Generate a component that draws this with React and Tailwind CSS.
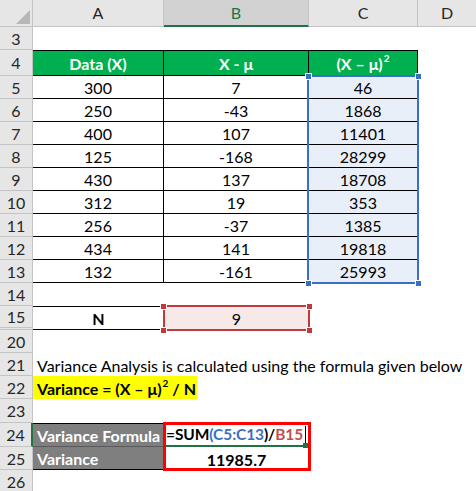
import React from "react";

const data = [
  [5, "300", "7", "46"],
  [6, "250", "-43", "1868"],
  [7, "400", "107", "11401"],
  [8, "125", "-168", "28299"],
  [9, "430", "137", "18708"],
  [10, "312", "19", "353"],
  [11, "256", "-37", "1385"],
  [12, "434", "141", "19818"],
  [13, "132", "-161", "25993"],
];

function RowHead({ children, className = "" }) {
  return (
    <div
      className={`w-[33px] shrink-0 bg-[#e6e6e6] border-r border-b border-[#c4c4c4] flex items-center justify-center text-[#262626] pt-[1px] ${className}`}
    >
      {children}
    </div>
  );
}

export default function App() {
  return (
    <div className="relative w-[476px] h-[491px] overflow-hidden bg-white text-[16px] leading-none text-black font-['Lato','Liberation_Sans',sans-serif]">
      {/* column headers */}
      <div className="flex h-[27px] bg-[#e6e6e6] text-[#262626] text-[16px]">
        <div className="relative w-[33px] shrink-0 border-r border-b border-[#c4c4c4]">
          <svg className="absolute left-[15px] top-[9px]" width="16" height="16" viewBox="0 0 16 16">
            <polygon points="15,1 15,15 1,15" fill="#b7b7b7" />
          </svg>
        </div>
        <div className="w-[131px] shrink-0 border-r border-b border-[#c4c4c4] flex items-center justify-center">A</div>
        <div className="w-[145px] shrink-0 border-r border-[#c4c4c4] border-b-2 border-b-[#217346] bg-[#d2d2d2] text-[#217346] flex items-center justify-center">B</div>
        <div className="w-[109px] shrink-0 border-r border-b border-[#c4c4c4] flex items-center justify-center">C</div>
        <div className="flex-1 border-b border-[#c4c4c4] flex items-center justify-center">D</div>
      </div>

      {/* row 3 */}
      <div className="flex h-[23px]">
        <RowHead>3</RowHead>
        <div className="flex-1" />
      </div>

      {/* row 4 header */}
      <div className="flex h-[26px]">
        <RowHead>4</RowHead>
        <div className="w-[131px] shrink-0 bg-[#00b050] border-t border-b border-r border-black flex items-center justify-center font-bold text-white pt-[2px]">Data (X)</div>
        <div className="w-[145px] shrink-0 bg-[#00b050] border-t border-b border-r border-black flex items-center justify-center font-bold text-white pt-[2px]">X - μ</div>
        <div className="w-[109px] shrink-0 bg-[#00b050] border-t border-b border-r border-black flex items-center justify-center font-bold text-white pt-[2px]">
          (X – μ)<span className="text-[10px] relative -top-[6px] ml-[1px]">2</span>
        </div>
        <div className="flex-1" />
      </div>

      {/* data rows */}
      {data.map(([n, a, b, c]) => (
        <div key={n} className="flex h-[23px]">
          <RowHead>{n}</RowHead>
          <div className="w-[131px] shrink-0 border-r border-b border-black flex items-center justify-center pt-[2px]">{a}</div>
          <div className="w-[145px] shrink-0 border-r border-b border-black flex items-center justify-center pt-[2px]">{b}</div>
          <div className="w-[109px] shrink-0 border-r border-b border-black bg-[#e9eff8] flex items-center justify-center pt-[2px]">{c}</div>
          <div className="flex-1" />
        </div>
      ))}

      {/* row 14 */}
      <div className="flex h-[23px]">
        <RowHead>14</RowHead>
        <div className="flex-1" />
      </div>

      {/* row 15 */}
      <div className="flex h-[24px]">
        <RowHead className="border-b-[3px] border-double">15</RowHead>
        <div className="w-[131px] shrink-0 border-t border-b border-black flex items-center justify-center font-bold pt-[2px]">N</div>
        <div className="w-[145px] shrink-0 bg-[#f8e9e9] flex items-center justify-center pt-[2px]">9</div>
        <div className="flex-1" />
      </div>

      {/* row 20 */}
      <div className="flex h-[23px]">
        <RowHead>20</RowHead>
        <div className="flex-1" />
      </div>

      {/* row 21 */}
      <div className="flex h-[23px]">
        <RowHead>21</RowHead>
        <div className="flex-1 flex items-center pl-[4px] pt-[2px] whitespace-nowrap">
          Variance Analysis is calculated using the formula given below
        </div>
      </div>

      {/* row 22 */}
      <div className="flex h-[23px]">
        <RowHead>22</RowHead>
        <div className="w-[164px] shrink-0 bg-[#ffff00] flex items-center pl-[4px] pt-[2px] font-bold whitespace-nowrap">
          Variance = (X – μ)<span className="text-[10px] relative -top-[6px] ml-[1px]">2</span>&nbsp;/ N
        </div>
        <div className="flex-1" />
      </div>

      {/* row 23 */}
      <div className="flex h-[24px]">
        <RowHead>23</RowHead>
        <div className="flex-1" />
      </div>

      {/* row 24 */}
      <div className="flex h-[24px]">
        <RowHead className="bg-[#d2d2d2] text-[#217346] border-r-2 border-r-[#217346]">24</RowHead>
        <div className="w-[131px] shrink-0 bg-[#7f7f7f] border-t border-b border-black border-b-[#5a5a5a] flex items-center pl-[4px] pt-[2px] font-bold text-white whitespace-nowrap">
          Variance Formula
        </div>
        <div className="relative w-[145px] shrink-0 border-b-2 border-[#217346] flex items-center pl-[2px] pt-[2px] font-bold whitespace-nowrap text-[15.5px] tracking-[-0.1px]">
          <span>=SUM</span>
          <span className="text-[#3a6fc4]">(C5:C13</span>
          <span>)/</span>
          <span className="text-[#c0504d]">B15</span>
          <span className="inline-block w-px h-[18px] bg-black ml-[2px]" />
          <span className="absolute right-[1px] -bottom-[3px] w-[5px] h-[5px] bg-[#217346]" />
        </div>
        <div className="flex-1" />
      </div>

      {/* row 25 */}
      <div className="flex h-[23px]">
        <RowHead>25</RowHead>
        <div className="w-[131px] shrink-0 bg-[#7f7f7f] border-b border-black flex items-center pl-[4px] pt-[2px] font-bold text-white">
          Variance
        </div>
        <div className="w-[145px] shrink-0 flex items-center justify-center pt-[2px] font-bold">11985.7</div>
        <div className="flex-1" />
      </div>

      {/* row 26 */}
      <div className="flex h-[23px]">
        <RowHead>26</RowHead>
        <div className="flex-1" />
      </div>

      {/* selection C5:C13 */}
      <div className="absolute left-[307px] top-[75px] w-[112px] h-[209px] border-2 border-[#3b6fc4]" />
      <div className="absolute left-[305px] top-[73px] w-[7px] h-[7px] bg-[#3b6fc4] border border-white" />
      <div className="absolute left-[415px] top-[73px] w-[7px] h-[7px] bg-[#3b6fc4] border border-white" />
      <div className="absolute left-[305px] top-[280px] w-[7px] h-[7px] bg-[#3b6fc4] border border-white" />
      <div className="absolute left-[415px] top-[280px] w-[7px] h-[7px] bg-[#3b6fc4] border border-white" />

      {/* selection B15 */}
      <div className="absolute left-[163px] top-[305px] w-[147px] h-[26px] border-2 border-[#c0393b]" />
      <div className="absolute left-[160px] top-[303px] w-[7px] h-[7px] bg-[#c0393b] border border-white" />
      <div className="absolute left-[306px] top-[303px] w-[7px] h-[7px] bg-[#c0393b] border border-white" />
      <div className="absolute left-[160px] top-[327px] w-[7px] h-[7px] bg-[#c0393b] border border-white" />
      <div className="absolute left-[306px] top-[327px] w-[7px] h-[7px] bg-[#c0393b] border border-white" />

      {/* red highlight box */}
      <div className="absolute left-[163px] top-[422px] w-[148px] h-[49px] border-[3px] border-[#ff0000]" />
    </div>
  );
}
